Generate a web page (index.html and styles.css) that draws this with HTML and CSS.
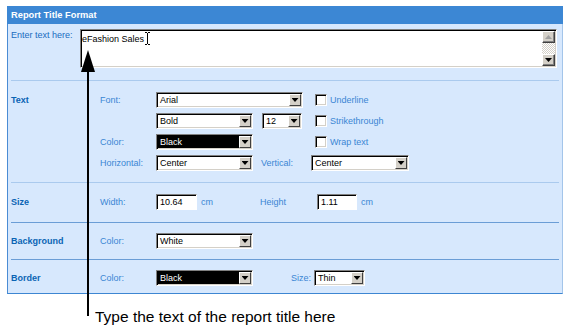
FILE: index.html
```html
<!DOCTYPE html>
<html>
<head>
<meta charset="utf-8">
<title>Report Title Format</title>
<link rel="stylesheet" href="styles.css">
</head>
<body>
<div class="page">
  <div class="panel">
    <div class="titlebar">Report Title Format</div>
    <div class="body">
      <div class="sec enter">
        <div class="enter-label">Enter text here:</div>
        <div class="textarea">
          <div class="ta-text">eFashion Sales<svg class="ibeam" width="5" height="13" viewBox="0 0 5 13"><path d="M0 0.5h2M3 0.5h2M2.5 1v11M0 12.5h2M3 12.5h2" stroke="#000" stroke-width="1" fill="none"/></svg></div>
          <div class="scroll">
            <div class="sb-btn up"></div>
            <div class="sb-track"></div>
            <div class="sb-btn down"></div>
          </div>
        </div>
      </div>

      <div class="sec grid text-sec">
        <span class="seclabel">Text</span>
        <span class="fl">Font:</span>
        <div class="sel w147 span2"><span class="v">Arial</span><span class="b"></span></div>
        <label class="chk"><span class="cb"></span>Underline</label>

        <span></span>
        <span></span>
        <div class="sel w97"><span class="v">Bold</span><span class="b"></span></div>
        <div class="sel w40 ml9"><span class="v">12</span><span class="b"></span></div>
        <label class="chk"><span class="cb"></span>Strikethrough</label>

        <span></span>
        <span class="fl">Color:</span>
        <div class="sel w97 black"><span class="v">Black</span><span class="b"></span></div>
        <span></span>
        <label class="chk"><span class="cb"></span>Wrap text</label>

        <span></span>
        <span class="fl">Horizontal:</span>
        <div class="sel w97"><span class="v">Center</span><span class="b"></span></div>
        <span class="fl ml8">Vertical:</span>
        <div class="sel w98 mlm1"><span class="v">Center</span><span class="b"></span></div>
      </div>

      <div class="sec grid size-sec dark">
        <span class="seclabel">Size</span>
        <span class="fl">Width:</span>
        <div class="inp-wrap"><span class="inp w41">10.64</span><span class="unit">cm</span></div>
        <span class="fl ml7">Height</span>
        <div class="inp-wrap ml5"><span class="inp w40">1.11</span><span class="unit">cm</span></div>
      </div>

      <div class="sec grid bg-sec dark">
        <span class="seclabel">Background</span>
        <span class="fl">Color:</span>
        <div class="sel w97"><span class="v">White</span><span class="b"></span></div>
      </div>

      <div class="sec grid border-sec">
        <span class="seclabel">Border</span>
        <span class="fl">Color:</span>
        <div class="sel w97 black"><span class="v">Black</span><span class="b"></span></div>
        <span class="fl ml38">Size:</span>
        <div class="sel w51 ml2"><span class="v">Thin</span><span class="b"></span></div>
      </div>
    </div>
  </div>
  <div class="caption">Type the text of the report title here</div>
  <svg class="arrow" width="16" height="268" viewBox="0 0 16 268">
    <polygon points="8,1 1,23 15,23" fill="#000"/>
    <rect x="7" y="22" width="2" height="245" fill="#000"/>
  </svg>
</div>
</body>
</html>
```

FILE: styles.css
```css
* { box-sizing: border-box; }
html, body { margin: 0; background: #fff; }
body {
  font-family: "Liberation Sans", Arial, sans-serif;
  font-size: 9px;
  width: 570px;
  height: 331px;
  overflow: hidden;
}
.page { position: relative; padding: 6px 0 0 7px; }
.panel { width: 556px; }
.titlebar {
  height: 18px;
  background: #3c87d4;
  color: #fff;
  font-weight: bold;
  font-size: 9.3px;
  line-height: 18px;
  padding-left: 4px;
}
.body {
  background: #d7e8fd;
  border: 1px solid #4a8cd4;
  border-top: 0;
  border-right-color: #a3c5ea;
  border-bottom-color: #3d86d2;
  padding: 0 3px;
}
.sec { border-bottom: 1px solid #aacaee; }
.sec.dark { border-bottom-color: #6a9dd6; }
.sec:last-child { border-bottom: 0; }

.enter { display: flex; align-items: flex-start; padding: 5px 0 12px; }
.enter-label { width: 69px; color: #1a6cc0; line-height: 12px; }
.textarea {
  width: 477px;
  height: 39px;
  display: flex;
  background: #fff;
  border: 1px solid;
  border-color: #808080 #fff #fff #808080;
  box-shadow: inset 1px 1px 0 #000, inset -1px -1px 0 #d4d0c8;
  padding: 1px;
}
.ta-text { flex: 1; line-height: 12px; padding-top: 1px; color: #000; }
.ibeam { vertical-align: -3px; margin-left: 1px; }
.scroll { width: 13px; display: flex; flex-direction: column; }
.sb-btn {
  height: 12px;
  background: #d4d0c8;
  border: 1px solid;
  border-color: #fff #404040 #404040 #fff;
  box-shadow: inset -1px -1px 0 #808080;
  display: flex;
  align-items: center;
  justify-content: center;
}
.sb-btn::after { content: ""; width: 7px; height: 4px; }
.sb-btn.up::after { background: #a0a0a0; clip-path: polygon(50% 0, 100% 100%, 0 100%); }
.sb-btn.down::after { background: #000; clip-path: polygon(0 0, 100% 0, 50% 100%); }
.sb-track {
  flex: 1;
  background: repeating-conic-gradient(#d4d0c8 0 25%, #fff 0 50%) 0 0 / 2px 2px;
}

.grid {
  display: grid;
  grid-template-columns: 89px 56px 97px 59px 1fr;
  grid-auto-rows: 16px;
  row-gap: 5px;
  align-items: center;
  line-height: 12px;
}
.text-sec { padding: 11px 0 11px; }
.size-sec { padding: 11px 0 12px; }
.bg-sec { padding: 10px 0 10px; }
.border-sec { padding: 10px 0 7px; }

.seclabel { color: #0a64b4; font-weight: bold; }
.fl { color: #3a86d4; white-space: nowrap; }

.sel {
  height: 16px;
  display: flex;
  background: #fff;
  border: 1px solid;
  border-color: #808080 #fff #fff #808080;
  box-shadow: inset 1px 1px 0 #000, inset -1px -1px 0 #d4d0c8;
  padding: 1px;
  justify-self: start;
}
.sel .v {
  flex: 1;
  padding-left: 2px;
  line-height: 12px;
  color: #000;
  white-space: nowrap;
  overflow: hidden;
}
.sel.black .v { background: #000; color: #fff; }
.sel .b {
  width: 12px;
  height: 12px;
  background: #d4d0c8;
  border: 1px solid;
  border-color: #fff #404040 #404040 #fff;
  display: flex;
  align-items: center;
  justify-content: center;
}
.sel .b::after {
  content: "";
  width: 7px;
  height: 4px;
  background: #000;
  clip-path: polygon(0 0, 100% 0, 50% 100%);
}
.span2 { grid-column: span 2; }
.w147 { width: 147px; }
.w97 { width: 97px; }
.w98 { width: 98px; }
.w40 { width: 40px; }
.w41 { width: 41px; }
.w51 { width: 51px; }
.ml2 { margin-left: 2px; }
.ml5 { margin-left: 5px; }
.ml7 { margin-left: 7px; }
.ml8 { margin-left: 8px; }
.ml9 { margin-left: 9px; }
.ml38 { margin-left: 38px; }
.mlm1 { margin-left: -1px; }

.chk { display: flex; align-items: center; gap: 3px; margin-left: 3px; color: #3a86d4; white-space: nowrap; }
.cb {
  width: 12px;
  height: 12px;
  background: #fff;
  border: 1px solid;
  border-color: #808080 #fff #fff #808080;
  box-shadow: inset 1px 1px 0 #000, inset -1px -1px 0 #d4d0c8;
}

.inp-wrap { display: flex; align-items: center; }
.inp {
  height: 16px;
  display: block;
  background: #fff;
  border: 1px solid;
  border-color: #808080 #fff #fff #808080;
  box-shadow: inset 1px 1px 0 #000;
  padding: 1px 3px;
  line-height: 12px;
  color: #000;
}
.unit { margin-left: 4px; color: #3a86d4; }

.caption {
  margin: 14px 0 0 88px;
  font-size: 15.5px;
  line-height: 18px;
  color: #000;
}
.arrow { position: absolute; left: 80px; top: 49px; }
```
